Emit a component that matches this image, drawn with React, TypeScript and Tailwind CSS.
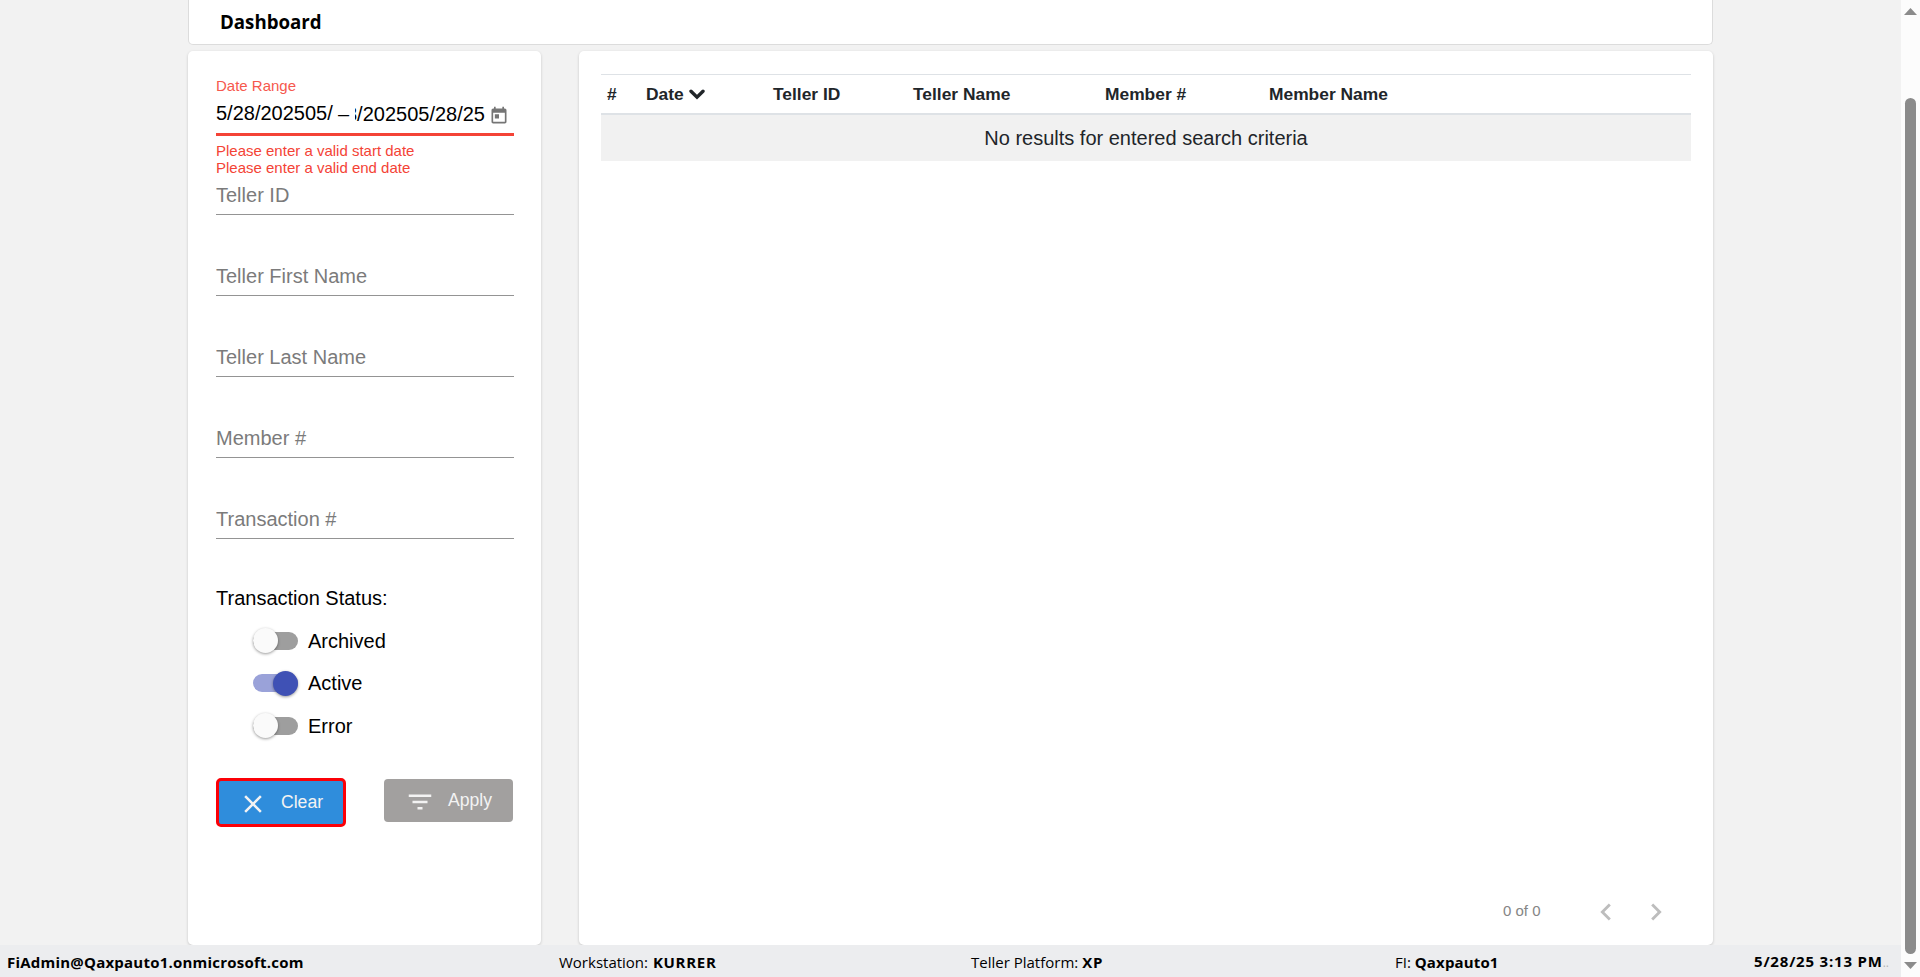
import { useState } from "react";

interface FieldProps {
  label: string;
}

function Field({ label }: FieldProps) {
  return (
    <div className="mb-[49px] h-8 border-b border-[#949494]">
      <input
        placeholder={label}
        className="block h-6 w-full bg-transparent text-[20px] leading-6 text-black outline-none placeholder:text-[#7b7b7b]"
      />
    </div>
  );
}

interface ToggleProps {
  label: string;
  checked: boolean;
  onChange: () => void;
}

function Toggle({ label, checked, onChange }: ToggleProps) {
  return (
    <button
      type="button"
      role="switch"
      aria-checked={checked}
      onClick={onChange}
      className="flex h-[42.5px] items-center gap-[10px] pl-[37px]"
    >
      <span
        className={`flex h-[18px] w-[45px] items-center rounded-full ${
          checked ? "justify-end bg-[#9aa2d9]" : "justify-start bg-[#9e9e9e]"
        }`}
      >
        <span
          className={`size-[25px] shrink-0 rounded-full shadow-[0_1px_3px_rgba(0,0,0,0.4)] ${
            checked ? "bg-[#3f51b5]" : "bg-[#fafafa]"
          }`}
        />
      </span>
      <span className="text-[20px] leading-6 text-black">{label}</span>
    </button>
  );
}

interface IconProps {
  path: string;
  className: string;
}

function Icon({ path, className }: IconProps) {
  return (
    <svg viewBox="0 0 24 24" fill="currentColor" className={`shrink-0 ${className}`}>
      <path d={path} />
    </svg>
  );
}

const icons = {
  calendar:
    "M19 3h-1V1h-2v2H8V1H6v2H5c-1.11 0-1.99.9-1.99 2L3 19c0 1.1.89 2 2 2h14c1.1 0 2-.9 2-2V5c0-1.1-.9-2-2-2zm0 16H5V8h14v11zM7 10h5v5H7z",
  close:
    "M19 6.41L17.59 5 12 10.59 6.41 5 5 6.41 10.59 12 5 17.59 6.41 19 12 13.41 17.59 19 19 17.59 13.41 12z",
  filter: "M10 18h4v-2h-4v2zM3 6v2h18V6H3zm3 7h12v-2H6v2z",
  left: "M15.41 7.41L14 6l-6 6 6 6 1.41-1.41L10.83 12z",
  right: "M10 6L8.59 7.41 13.17 12l-4.58 4.59L10 18l6-6z",
};

function SearchPanel() {
  const [status, setStatus] = useState({
    Archived: false,
    Active: true,
    Error: false,
  });

  return (
    <aside className="w-[353px] rounded-[5px] bg-white px-7 pt-[26px] shadow-[0_1px_3px_rgba(0,0,0,0.18)]">
      <div className="w-[298px]">
        <div className="text-[15px] leading-[18px] text-[#f6584d]">Date Range</div>
        <div className="mt-[6px] flex h-[35px] items-start border-b-3 border-[#f44336] text-[20px] leading-6 text-black">
          <span className="w-[118px]">5/28/202505/</span>
          <span className="w-[21px] pt-px pl-1">–</span>
          {/* the end date is wider than its input, only its tail is visible */}
          <span className="flex w-[130px] justify-end overflow-hidden pt-px whitespace-nowrap">
            8/202505/28/25
          </span>
          <Icon path={icons.calendar} className="mt-[5px] ml-[3.5px] size-5 text-[#757575]" />
        </div>
        <div className="mt-[6px] mb-[7px] text-[15px] leading-[17px] text-[#f44336]">
          <p>Please enter a valid start date</p>
          <p>Please enter a valid end date</p>
        </div>

        <Field label="Teller ID" />
        <Field label="Teller First Name" />
        <Field label="Teller Last Name" />
        <Field label="Member #" />
        <Field label="Transaction #" />

        <div className="-mt-[2px] mb-[9.5px] text-[20px] leading-6 text-black">Transaction Status:</div>
        {(Object.keys(status) as (keyof typeof status)[]).map((key) => (
          <Toggle
            key={key}
            label={key}
            checked={status[key]}
            onChange={() => setStatus((prev) => ({ ...prev, [key]: !prev[key] }))}
          />
        ))}

        <div className="mt-[31px] flex items-start gap-[38px] text-[17.6px] leading-6 text-[#f3f3f3]">
          <button
            type="button"
            className="flex h-[49px] w-[130px] items-center rounded-[5px] border-3 border-[#fb0007] bg-[#2f8ddc] pl-[19px]"
          >
            <Icon path={icons.close} className="mt-[3px] size-[30px]" />
            <span className="-mt-px ml-[13px]">Clear</span>
          </button>
          <button
            type="button"
            className="mt-px flex h-[43px] w-[129px] items-center rounded-[4px] bg-[#a2a09f] pl-[21px]"
          >
            <Icon path={icons.filter} className="mt-[3px] size-[30px]" />
            <span className="-mt-px ml-[13px]">Apply</span>
          </button>
        </div>
      </div>
    </aside>
  );
}

function ResultsPanel() {
  return (
    <section className="flex w-[1134px] flex-col justify-between rounded-[5px] bg-white pt-[23px] pr-[22px] pl-[22px] shadow-[0_1px_3px_rgba(0,0,0,0.18)]">
      <table className="w-full table-fixed border-separate border-spacing-0 text-left text-[#212529]">
        <thead>
          <tr className="text-[17.4px] leading-6 *:h-[41px] *:border-t *:border-b-2 *:border-[#dee2e6]">
            <th className="w-[39px] pl-[6px]">#</th>
            <th className="w-[127px] pl-[6px]">
              <span className="flex items-center gap-[5px]">
                Date
                <svg viewBox="0 0 16 11" className="mt-px h-[11px] w-4">
                  <path
                    d="M2 2.2l6 6 6-6"
                    fill="none"
                    stroke="currentColor"
                    strokeWidth="3.4"
                    strokeLinecap="round"
                  />
                </svg>
              </span>
            </th>
            <th className="w-[140px] pl-[6px]">Teller ID</th>
            <th className="w-[192px] pl-[6px]">Teller Name</th>
            <th className="w-[164px] pl-[6px]">Member #</th>
            <th className="pl-[6px]">Member Name</th>
          </tr>
        </thead>
        <tbody>
          <tr className="h-[46px] bg-[#f1f1f1]">
            <td colSpan={6} className="text-center text-[20px] leading-6">
              No results for entered search criteria
            </td>
          </tr>
        </tbody>
      </table>

      <div className="mb-[16px] flex h-[34px] items-center justify-end pr-[18px] text-[#bdbdbd]">
        <span className="mr-[48.5px] -mt-[2px] text-[15px] text-[#858585]">0 of 0</span>
        <button type="button" aria-label="Previous page">
          <Icon path={icons.left} className="size-[34px]" />
        </button>
        <button type="button" aria-label="Next page" className="ml-4">
          <Icon path={icons.right} className="size-[34px]" />
        </button>
      </div>
    </section>
  );
}

function StatusBar() {
  return (
    <footer className="flex h-8 items-center bg-[#ecedef] pt-px pl-[7px] font-['Open_Sans','Noto_Sans',sans-serif] text-[15px] leading-8 whitespace-nowrap text-black">
      <div className="w-[552px] font-bold tracking-[0.22px]">FiAdmin@Qaxpauto1.onmicrosoft.com</div>
      <div className="w-[412px]">
        Workstation: <b className="ml-px tracking-[0.7px]">KURRER</b>
      </div>
      <div className="w-[424px]">
        Teller Platform: <b className="tracking-[0.8px]">XP</b>
      </div>
      <div className="w-[359px]">
        FI: <b className="tracking-[0.15px]">Qaxpauto1</b>
      </div>
      <div>
        <b className="tracking-[0.8px]">5/28/25 3:13 PM</b>
        <span className="text-[12px] text-[#b4b4b4]">..</span>
      </div>
    </footer>
  );
}

function Scrollbar() {
  return (
    <div className="flex w-[19px] flex-col items-center bg-[#fcfcfc]">
      <svg viewBox="0 0 13 7" className="mt-2 h-[7px] w-[13px] fill-[#8b8b8b]">
        <path d="M0 7L6.5 0 13 7z" />
      </svg>
      <div className="mt-[83px] h-[856px] w-[11px] rounded-full bg-[#8b8b8b]" />
      <svg viewBox="0 0 13 7" className="mt-2 h-[7px] w-[13px] fill-[#8b8b8b]">
        <path d="M0 0h13L6.5 7z" />
      </svg>
    </div>
  );
}

export default function App() {
  return (
    <div className="flex h-[977px] w-[1920px] overflow-hidden bg-[#f2f2f2] font-['Liberation_Sans',Arial,sans-serif]">
      <div className="flex flex-1 flex-col">
        <header className="ml-[188px] h-[45px] w-[1525px] rounded-b-[5px] border border-t-0 border-[#dcdcdc] bg-white pt-[9px] pl-[31px] font-['Open_Sans','Noto_Sans',sans-serif] text-[18.7px] leading-[26px] font-bold text-black">
          Dashboard
        </header>
        <main className="mt-[6px] ml-[188px] flex flex-1 gap-[38px]">
          <SearchPanel />
          <ResultsPanel />
        </main>
        <StatusBar />
      </div>
      <Scrollbar />
    </div>
  );
}
